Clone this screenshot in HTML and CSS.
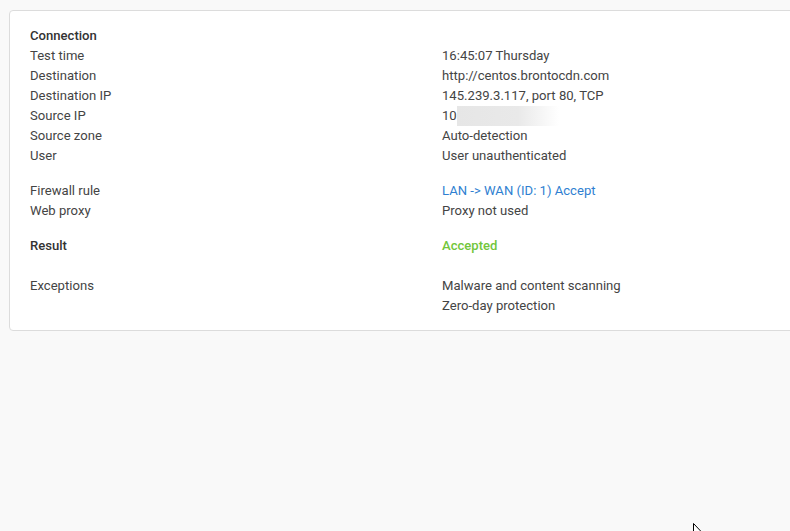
FILE: index.html
```html
<!DOCTYPE html>
<html>
	<head lang="en">
		<meta charset="UTF-8">
		<title>Policy test result</title>
		<link rel="stylesheet" href="styles.css">
	</head>
	<body>
		<div class="page">
			<div class="card">
				<!-- connection -->
				<div class="group">
					<div class="row head"><span>Connection</span><span></span></div>
					<div class="row"><span>Test time</span><span>16:45:07 Thursday</span></div>
					<div class="row"><span>Destination</span><span>http://centos.brontocdn.com</span></div>
					<div class="row"><span>Destination IP</span><span>145.239.3.117, port 80, TCP</span></div>
					<div class="row"><span>Source IP</span><span class="masked">10<i class="blur"></i></span></div>
					<div class="row"><span>Source zone</span><span>Auto-detection</span></div>
					<div class="row"><span>User</span><span>User unauthenticated</span></div>
				</div>
				<!-- rule -->
				<div class="group">
					<div class="row"><span>Firewall rule</span><a href="javascript:;" class="link">LAN -&gt; WAN (ID: 1) Accept</a></div>
					<div class="row"><span>Web proxy</span><span>Proxy not used</span></div>
				</div>
				<div class="group">
					<div class="row head"><span>Result</span><span class="ok">Accepted</span></div>
				</div>
				<div class="group last">
					<div class="row"><span>Exceptions</span><span>Malware and content scanning</span></div>
					<div class="row"><span></span><span>Zero-day protection</span></div>
				</div>
			</div>
		</div>
		<svg class="cursor" width="12" height="18" viewBox="0 0 12 18">
			<path d="M0.5 0.5 L0.5 14 L3.5 11 L6 16.5 L8 15.5 L5.5 10.5 L10 10.5 Z" fill="#fff" stroke="#000" stroke-width="1"/>
		</svg>
	</body>
</html>
```

FILE: styles.css
```css
* {
	margin: 0;
	padding: 0;
	box-sizing: border-box;
}

body {
	background-color: #f9f9f9;
	font-family: Roboto, "Liberation Sans", sans-serif;
	font-size: 13.1px;
	color: #444;
	height: 531px;
	overflow: hidden;
}

.page {
	width: 790px;
	overflow: hidden;
	padding: 10px 0 0 9px;
}

/* 白色卡片 */
.card {
	width: 800px;
	background-color: #fff;
	border: 1px solid #dcdcdc;
	border-radius: 4px;
	padding: 15px 20px 14px 20px;
}

.group {
	margin-bottom: 15px;
}

.group.last {
	margin-top: 20px;
	margin-bottom: 0;
}

.row {
	display: grid;
	grid-template-columns: 412px 1fr;
	height: 20px;
	line-height: 20px;
}

.row.head span:first-child {
	font-weight: 500;
	color: #333;
}

.link {
	color: #2f7fd1;
	text-decoration: none;
}

.ok {
	color: #72c63c;
	font-weight: 500;
}

/* 打码的IP */
.masked {
	display: flex;
	align-items: center;
}

.blur {
	display: inline-block;
	width: 102px;
	height: 20px;
	background: linear-gradient(to right, #e6e6e6, #e9e9e9 60%, #fff);
}

.cursor {
	position: absolute;
	left: 693px;
	top: 523px;
}
```
